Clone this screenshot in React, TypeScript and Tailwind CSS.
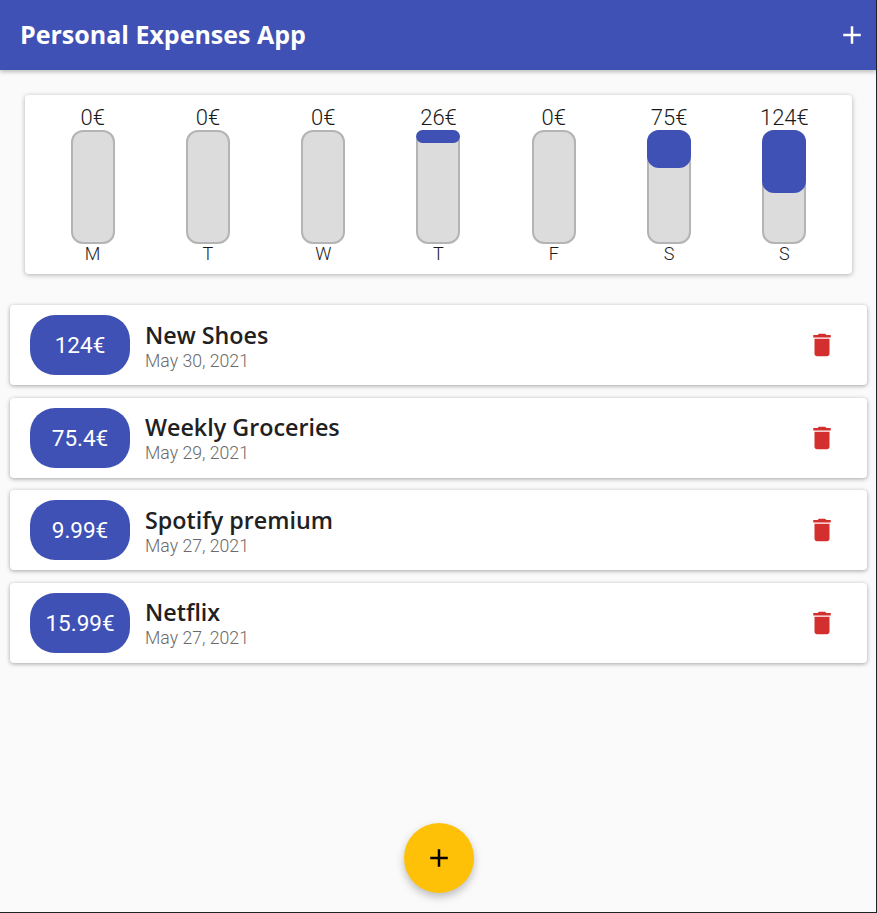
const ADD = "M19 13h-6v6h-2v-6H5v-2h6V5h2v6h6v2z";
const DEL = "M6 19c0 1.1.9 2 2 2h8c1.1 0 2-.9 2-2V7H6v12zM19 4h-3.5l-1-1h-5l-1 1H5v2h14V4z";

function Icon({ d, className }: { d: string; className: string }) {
  return (
    <svg viewBox="0 0 24 24" fill="currentColor" className={className}>
      <path d={d} />
    </svg>
  );
}

const bars = [
  { day: "M", value: "0€", h: 0 },
  { day: "T", value: "0€", h: 0 },
  { day: "W", value: "0€", h: 0 },
  { day: "T", value: "26€", h: 13 },
  { day: "F", value: "0€", h: 0 },
  { day: "S", value: "75€", h: 38 },
  { day: "S", value: "124€", h: 63 },
];

const items = [
  { amount: "124€", title: "New Shoes", date: "May 30, 2021" },
  { amount: "75.4€", title: "Weekly Groceries", date: "May 29, 2021" },
  { amount: "9.99€", title: "Spotify premium", date: "May 27, 2021" },
  { amount: "15.99€", title: "Netflix", date: "May 27, 2021" },
];

export default function App() {
  return (
    <div className="relative w-[877px] h-[913px] overflow-hidden border-r border-b border-[#202124] bg-[#fafafa] font-['Roboto',sans-serif] text-[#212121]">
      <header className="h-[70px] bg-[#3f51b5] flex items-center justify-between pl-[20px] pr-[9px] shadow-[0_2px_4px_rgba(0,0,0,0.25)] text-white">
        <h1 className="font-['Open_Sans',sans-serif] font-bold text-[25px] leading-[32px] pb-[2px] box-content">Personal Expenses App</h1>
        <Icon d={ADD} className="w-[30px] h-[30px]" />
      </header>

      <section className="mt-[25px] mx-[25px] w-[827px] h-[179px] bg-white rounded-[4px] shadow-[0_1px_5px_rgba(0,0,0,0.3)] px-[10px] pt-[10px] flex">
        {bars.map((b, i) => (
          <div key={i} className="flex-1 flex flex-col items-center">
            <div className="h-[25px] leading-[25px] text-[22px] font-light text-[#1a1a1a]">{b.value}</div>
            <div className="relative w-[44px] h-[114px] rounded-[12px] border-2 border-[#b4b4b4] bg-[#dcdcdc]">
              {b.h > 0 && (
                <div
                  className="absolute -left-[2px] -right-[2px] -top-[2px] bg-[#3f51b5] rounded-[12px]"
                  style={{ height: b.h }}
                />
              )}
            </div>
            <div className="h-[20px] leading-[20px] text-[18px] font-light text-[#1a1a1a]">{b.day}</div>
          </div>
        ))}
      </section>

      <ul className="mt-[31px] ml-[10px] mr-[9px] flex flex-col gap-[12.5px]">
        {items.map((it) => (
          <li
            key={it.title + it.date}
            className="h-[80px] bg-white rounded-[4px] shadow-[0_1px_4px_rgba(0,0,0,0.35)] flex items-center pl-[20px] pr-[30px]"
          >
            <div className="w-[100px] h-[60px] pt-[2px] rounded-[25px] bg-[#3f51b5] text-white text-[22.5px] flex items-center justify-center">
              {it.amount}
            </div>
            <div className="ml-[15px] flex-1">
              <div className="font-['Open_Sans',sans-serif] font-[650] text-[23.3px] leading-[30px] pt-[1px] box-content">{it.title}</div>
              <div className="text-[17.7px] leading-[22px] box-content font-light text-[#6a6a6a]">{it.date}</div>
            </div>
            <Icon d={DEL} className="w-[30px] h-[30px] text-[#d32f2f]" />
          </li>
        ))}
      </ul>

      <button className="absolute left-[403.5px] top-[823px] w-[70px] h-[70px] rounded-full bg-[#ffc107] text-black flex items-center justify-center shadow-[0_4px_8px_rgba(0,0,0,0.25)]">
        <Icon d={ADD} className="w-[30px] h-[30px]" />
      </button>
    </div>
  );
}
